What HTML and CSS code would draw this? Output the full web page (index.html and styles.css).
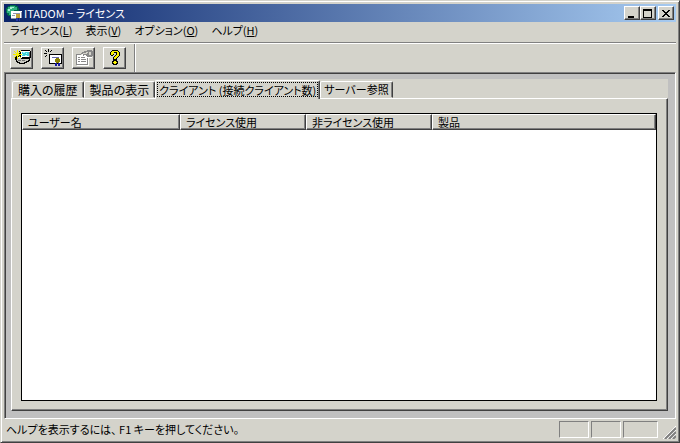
FILE: index.html
```html
<!DOCTYPE html>
<html lang="ja">
<head>
    <meta charset="UTF-8">
    <meta name="viewport" content="width=device-width, initial-scale=1.0">
    <title>ITADOM - ライセンス</title>
    <link rel="stylesheet" href="styles.css">
</head>
<body>
    <div class="window">
        <header class="title-bar">
            <svg class="app-icon" width="16" height="16" viewBox="0 0 16 16" shape-rendering="crispEdges">
                <path fill="#006848" d="M4 0h6v1h2v2h1v7h-1v2H4v-1H2v-1H1V8H0V3h1V2h1V1h2z"/>
                <path fill="#30b080" d="M4 1h5v1h2v3H8v2H5v3H3V8H1V4h1V2h2z"/>
                <path fill="#a8f0d0" d="M4 2h4v1H6v1H4v2H2V4h2z"/>
                <path fill="#fff" d="M5 6h11v7H5z"/>
                <path fill="#9098b0" d="M5 13h6v1H5zM7 8h7v1H7zM6 10h3v1H6zM15 7h1v6h-1z"/>
                <path fill="#c0a038" d="M10 9h4v4h-4z"/>
                <path fill="#2838a8" d="M10 13h2v3h-2zM13 13h1v3h-1z"/>
            </svg>
            <h1>ITADOM − ライセンス</h1>
            <div class="window-buttons">
                <button class="window-button" aria-label="最小化">
                    <svg width="12" height="10" shape-rendering="crispEdges"><path d="M2 8h6v2H2z"/></svg>
                </button>
                <button class="window-button" aria-label="最大化">
                    <svg width="12" height="10" shape-rendering="crispEdges"><path fill-rule="evenodd" d="M1 1h9v9H1zM2 3v6h7V3z"/></svg>
                </button>
                <button class="window-button close" aria-label="閉じる">
                    <svg width="12" height="10" shape-rendering="crispEdges"><path d="M2 2h2v1h1v1h2V3h1V2h2v1H9v1H8v1H7v1h1v1h1v1h1v1H8V8H7V7H5v1H4v1H2V8h1V7h1V6h1V5H4V4H3V3H2z"/></svg>
                </button>
            </div>
        </header>

        <nav class="menu-bar">
            <a href="#">ライセンス(<u>L</u>)</a>
            <a href="#">表示(<u>V</u>)</a>
            <a href="#">オプション(<u>O</u>)</a>
            <a href="#">ヘルプ(<u>H</u>)</a>
        </nav>

        <div class="toolbar">
            <button class="tool-button" aria-label="サーバーの選択">
                <svg width="18" height="17" viewBox="0 0 18 17" shape-rendering="crispEdges">
                    <path d="M8 1h9v1h1v7h-1v3h-1v1h-2v1h-2v1H6v-1H4v-1H3v-2H2V8h1V5h3V2h2z"/>
                    <path fill="#fff" d="M8 2h9v6H8zM4 8h5v1H4z"/>
                    <path fill="#c8c8c0" d="M4 9h4v1h8v1h-1v1h-2v1h-2v1H7v-1H5v-1H4z"/>
                    <path fill="#707070" d="M5 11h3v1H5zM9 11h3v1H9zM16 3h1v5h-1z"/>
                    <path fill="#40d0d8" d="M9 3h7v4H9z"/>
                    <path fill="#b0f8f8" d="M10 3h2v1h-2zM13 4h1v1h-1zM9 5h1v1H9zM12 6h2v1h-2z"/>
                    <path fill="#f8f000" d="M4 1h1v3h1V3h1V2h1v1H7v1H6v1h3v1H6v1h1v1h1v1H7V8H6V7H5v3H4V7H3v1H2v1H1V8h1V7h1V6H0V5h3V4H2V3H1V2h1v1h1v1h1z"/>
                </svg>
            </button>
            <button class="tool-button" aria-label="新しいライセンス">
                <svg width="18" height="17" viewBox="0 0 18 17" shape-rendering="crispEdges">
                    <path d="M5 5h13v10H5zM1 1h1v1H1zM2 2h1v1H2zM4 0h1v3H4zM6 2h1v1H6zM7 1h1v1H7zM0 4h3v1H0zM2 6h1v1H2zM1 7h1v1H1z"/>
                    <path fill="#fff" d="M6 6h11v8H6z"/>
                    <path fill="#6868a8" d="M8 8h7v1H8z"/>
                    <path fill="#888000" d="M12 9h3v1h1v3h-1v1h-3v-1h-1v-3h1z"/>
                    <path fill="#1818a0" d="M11 14h2v3h-2zM14 14h2v3h-2z"/>
                </svg>
            </button>
            <button class="tool-button" aria-label="プロパティ" disabled>
                <svg width="18" height="17" viewBox="0 0 18 17" shape-rendering="crispEdges">
                    <path fill="#fff" d="M2 6h12v11H2zM13 8h4v1h-4zM7 4h9v3H7z"/>
                    <path fill="#888" d="M1 5h5v1H2v9h10V9h1v7H1zM6 4h1V3h2V2h3V1h5v1h1v5h-1v1h-5V7h-1V6H9v1H8V5H6z"/>
                    <path fill="#d4d3cb" d="M8 4h3V3h2v1h-1v1H8zM14 3h2v3h-2z"/>
                    <path fill="#888" d="M3 8h2v1H3zM6 8h4v1H6zM3 10h2v1H3zM6 10h5v1H6zM3 12h2v1H3zM6 12h5v1H6z"/>
                </svg>
            </button>
            <button class="tool-button" aria-label="ヘルプ">
                <svg width="18" height="17" viewBox="0 0 18 17" shape-rendering="crispEdges">
                    <path d="M6 1h6v1h1v1h1v4h-1v1h-1v1h-1v2H7V8h1V7h1V6h1V4H8v2H7v1H5V6H4V3h1V2h1zM7 11h4v1h1v3h-1v1H7v-1H6v-3h1z"/>
                    <path fill="#f8f000" d="M6 2h6v1h1v4h-1v1h-1v1h-1v1H8V8h1V7h1V6h1V3H8v2H7v1H5V3h1zM8 12h2v1h1v1h-1v1H8v-1H7v-1h1z"/>
                </svg>
            </button>
            <span class="separator"></span>
        </div>

        <main class="client-area">
            <div class="tabs" role="tablist">
                <button class="tab full-width" role="tab">購入の履歴</button>
                <button class="tab full-width" role="tab">製品の表示</button>
                <button class="tab selected" role="tab" aria-selected="true">クライアント (接続クライアント数)</button>
                <button class="tab" role="tab">サーバー参照</button>
            </div>
            <section class="tab-page" role="tabpanel">
                <div class="list-view">
                    <table>
                        <colgroup>
                            <col class="col-user">
                            <col class="col-count">
                            <col class="col-count">
                            <col>
                        </colgroup>
                        <thead>
                            <tr>
                                <th>ユーザー名</th>
                                <th>ライセンス使用</th>
                                <th>非ライセンス使用</th>
                                <th>製品</th>
                            </tr>
                        </thead>
                        <tbody></tbody>
                    </table>
                </div>
            </section>
        </main>

        <footer class="status-bar">
            <span class="status-text">ヘルプを表示するには、 F1 キーを押してください。</span>
            <span class="pane"></span>
            <span class="pane"></span>
            <span class="pane wide"></span>
            <svg class="grip" width="13" height="13" viewBox="0 0 13 13">
                <path stroke="#fff" d="M0 13L13 0M4 13L13 4M8 13L13 8"/>
                <path stroke="#808080" stroke-width="2" d="M2 13L13 2M6 13L13 6M10 13L13 10"/>
            </svg>
        </footer>
    </div>
</body>
</html>
```

FILE: styles.css
```css
* {
    box-sizing: border-box;
}

body {
    margin: 0;
    background-color: #d4d3cb;
    color: #000;
    font-family: "Noto Sans CJK JP", sans-serif;
    font-size: 11px;
    line-height: 16px;
    font-feature-settings: "palt";
}

button {
    font: inherit;
    font-feature-settings: inherit;
    color: inherit;
    padding: 0;
    background-color: #d4d3cb;
}

.window {
    display: flex;
    flex-direction: column;
    height: 100vh;
    padding: 3px;
    border: 1px solid;
    border-color: #d4d3cb #404040 #404040 #d4d3cb;
    box-shadow: inset 1px 1px #fff, inset -1px -1px #808080;
}

.title-bar {
    display: flex;
    align-items: center;
    height: 18px;
    padding: 0 2px;
    background-image: linear-gradient(to right, #0a246a, #a6caf0);
    color: #fff;
}

.title-bar h1 {
    flex: 1;
    margin: 0 0 0 2px;
    font-size: 11px;
    font-weight: 400;
}

.window-buttons {
    display: flex;
}

.window-button {
    display: flex;
    width: 16px;
    height: 14px;
    padding: 1px;
    border: 1px solid;
    border-color: #fff #404040 #404040 #fff;
    box-shadow: inset -1px -1px #808080;
}

.window-button.close {
    margin-left: 2px;
}

.menu-bar {
    display: flex;
    gap: 13px;
    height: 20px;
    padding: 0 6px;
}

.menu-bar a {
    color: #000;
    text-decoration: none;
}

.toolbar {
    display: flex;
    align-items: center;
    gap: 8px;
    height: 30px;
    padding: 0 6px;
    border-top: 1px solid #808080;
    box-shadow: inset 0 1px #fff;
}

.tool-button {
    display: flex;
    align-items: center;
    justify-content: center;
    width: 23px;
    height: 22px;
    border: 1px solid;
    border-color: #fff #404040 #404040 #fff;
    box-shadow: inset -1px -1px #808080;
}

.separator {
    align-self: stretch;
    width: 2px;
    margin-top: 1px;
    border-left: 1px solid #808080;
    border-right: 1px solid #fff;
}

.client-area {
    display: flex;
    flex-direction: column;
    flex: 1;
    padding: 6px 7px 7px 6px;
    border: 1px solid;
    border-color: #808080 #fff #fff #808080;
    box-shadow: inset 1px 1px #404040;
    background-color: #c0c0c0;
}

.tabs {
    display: flex;
    align-items: flex-end;
    height: 19px;
    padding-left: 1px;
    background-color: #d4d3cb;
}

.tab {
    height: 17px;
    padding: 0 3px;
    border: 1px solid;
    border-color: #fff #404040 transparent #fff;
    border-radius: 2px 2px 0 0;
    box-shadow: inset -1px 0 #808080;
    line-height: 15px;
    white-space: nowrap;
}

.tab.full-width {
    padding: 0 5px;
    font-size: 12px;
}

.tab.selected {
    z-index: 1;
    height: 19px;
    margin-bottom: -1px;
    border-bottom: none;
    outline: 1px dotted #000;
    outline-offset: -3px;
}

.tab-page {
    display: flex;
    flex: 1;
    padding: 14px 10px 9px 9px;
    border: 1px solid;
    border-color: #fff #404040 #404040 #fff;
    box-shadow: inset -1px -1px #808080;
    background-color: #d4d3cb;
}

.list-view {
    flex: 1;
    border: 1px solid #000;
    background-color: #fff;
}

.list-view table {
    width: 100%;
    table-layout: fixed;
    border-collapse: separate;
    border-spacing: 0;
}

.col-user {
    width: 158px;
}

.col-count {
    width: 126px;
}

.list-view th {
    height: 16px;
    padding: 0 5px;
    border: 1px solid;
    border-color: #fff #404040 #404040 #fff;
    box-shadow: inset -1px -1px #808080;
    background-color: #d4d3cb;
    font-weight: 400;
    line-height: 14px;
    text-align: left;
}

.status-bar {
    display: flex;
    gap: 2px;
    height: 20px;
    padding-top: 2px;
}

.status-text {
    flex: 1;
    padding-left: 2px;
}

.pane {
    width: 30px;
    height: 17px;
    border: 1px solid;
    border-color: #808080 #fff #fff #808080;
}

.pane.wide {
    width: 35px;
}

.grip {
    align-self: flex-end;
    margin-left: 3px;
}
```
